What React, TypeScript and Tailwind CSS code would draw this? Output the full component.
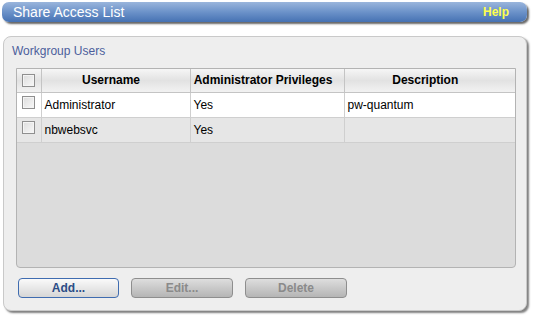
import React from 'react';

const font = { fontFamily: '"Liberation Sans", Arial, sans-serif' };

interface UserRow {
  name: string;
  admin: string;
  description: string;
}

const users: UserRow[] = [
  { name: 'Administrator', admin: 'Yes', description: 'pw-quantum' },
  { name: 'nbwebsvc', admin: 'Yes', description: '' },
];

const Checkbox: React.FC = () => (
  <span className="block w-[13px] h-[13px] border border-[#8f8f8f] bg-gradient-to-br from-[#dcdcdc] to-[#f8f8f8] shadow-[inset_0_0_0_1px_#f4f4f4]" />
);

const App: React.FC = () => {
  return (
    <div className="w-[533px] h-[320px] bg-white overflow-hidden pt-[2px]" style={font}>
      {/* title bar */}
      <div className="ml-[2px] w-[525px] h-[20px] rounded-[7px] bg-gradient-to-b from-[#9ab5dc] via-[#6c92c9] to-[#4672b3] shadow-[2px_2px_2px_rgba(0,0,0,0.6)] flex items-center justify-between pl-[11px] pr-[18px]">
        <span className="text-white text-[14px] leading-none">Share Access List</span>
        <span className="text-[#ffff4d] text-[12px] font-bold leading-none">Help</span>
      </div>

      {/* panel */}
      <div className="mt-[14px] ml-[3px] w-[524px] h-[275px] rounded-[8px] border border-[#c9c9c9] bg-[#eeeeee] shadow-[2px_2px_2px_rgba(0,0,0,0.5)] flex flex-col">
        <div className="pl-[8px] pt-[7px] h-[31px] text-[12px] text-[#4c5e9c] leading-[14px]">Workgroup Users</div>

        <div className="ml-[12px] w-[500px] h-[200px] border border-[#b3b3b3] rounded-b-[4px] bg-[#dcdcdc] overflow-hidden">
          <table className="w-full border-collapse text-[12px] text-black">
            <colgroup>
              <col className="w-[24px]" />
              <col className="w-[149px]" />
              <col className="w-[154px]" />
              <col />
            </colgroup>
            <thead>
              <tr className="h-[23px] bg-gradient-to-b from-[#f6f6f6] via-[#e2e2e2] to-[#f2f2f2]">
                <th className="border-r border-b border-[#c4c4c4] p-0">
                  <div className="flex justify-center"><Checkbox /></div>
                </th>
                <th className="border-r border-b border-[#c4c4c4] font-bold text-center pr-[9px]">Username</th>
                <th className="border-r border-b border-[#c4c4c4] font-bold text-center pr-[8px]">Administrator Privileges</th>
                <th className="border-b border-[#c4c4c4] font-bold text-center pr-[9px]">Description</th>
              </tr>
            </thead>
            <tbody>
              {users.map((u, i) => (
                <tr key={u.name} className={`h-[25px] ${i === 0 ? 'bg-white' : 'bg-[#e6e6e6]'}`}>
                  <td className="border-r border-b border-[#cfcfcf] p-0 align-top">
                    <div className="flex justify-center pt-[3px]"><Checkbox /></div>
                  </td>
                  <td className="border-r border-b border-[#cfcfcf] pl-[3px]">{u.name}</td>
                  <td className="border-r border-b border-[#cfcfcf] pl-[3px]">{u.admin}</td>
                  <td className="border-b border-[#cfcfcf] pl-[3px]">{u.description}</td>
                </tr>
              ))}
            </tbody>
          </table>
        </div>

        <div className="flex gap-[12px] ml-[14px] mt-[10px]">
          <button className="w-[101px] h-[20px] rounded-[4px] border border-[#3f6cb0] bg-gradient-to-b from-[#fafafa] via-[#e8e8e8] to-[#d6d6d6] text-[12px] font-bold text-[#2b4c86] leading-none">
            Add...
          </button>
          <button className="w-[102px] h-[20px] rounded-[4px] border border-[#8e8e8e] bg-gradient-to-b from-[#dedede] via-[#c9c9c9] to-[#b5b5b5] text-[12px] font-bold text-[#8a8a8a] leading-none">
            Edit...
          </button>
          <button className="w-[102px] h-[20px] rounded-[4px] border border-[#8e8e8e] bg-gradient-to-b from-[#dedede] via-[#c9c9c9] to-[#b5b5b5] text-[12px] font-bold text-[#8a8a8a] leading-none">
            Delete
          </button>
        </div>
      </div>
    </div>
  );
};

export default App;
